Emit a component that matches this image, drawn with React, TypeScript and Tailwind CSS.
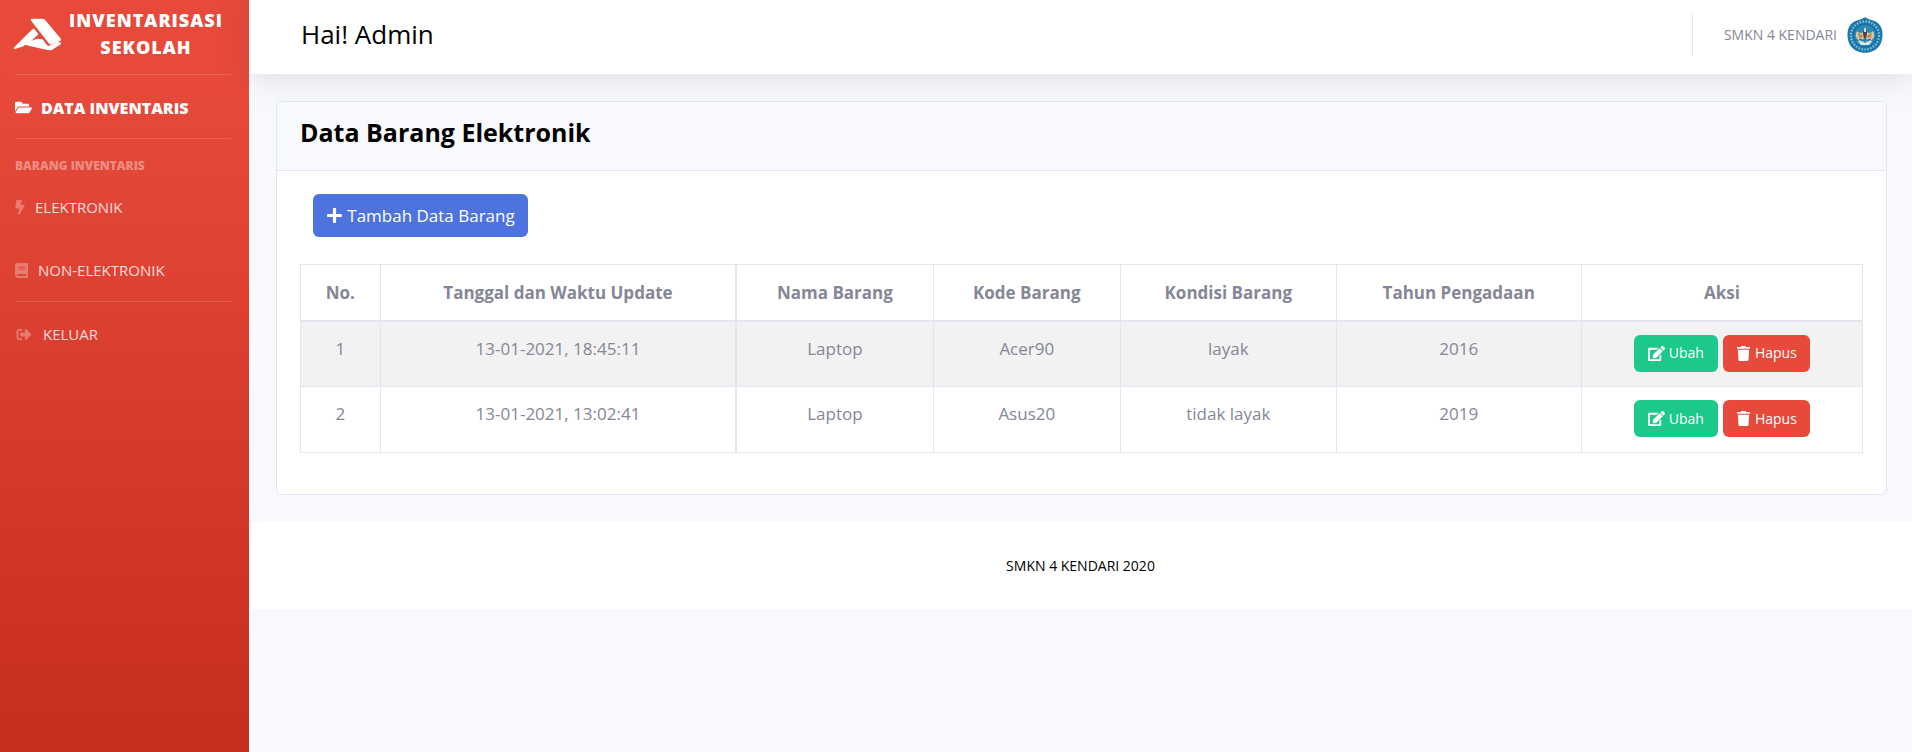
import type { ReactNode } from 'react'
import { FaAccusoft, FaBolt, FaBook, FaEdit, FaFolderOpen, FaPlus, FaSignOutAlt, FaTrash } from 'react-icons/fa'

type Item = {
  updated: string
  name: string
  code: string
  condition: string
  year: number
}

const items: Item[] = [
  { updated: '13-01-2021, 18:45:11', name: 'Laptop', code: 'Acer90', condition: 'layak', year: 2016 },
  { updated: '13-01-2021, 13:02:41', name: 'Laptop', code: 'Asus20', condition: 'tidak layak', year: 2019 },
]

const columns = [
  { label: 'No.', width: 'w-[5.1%]' },
  { label: 'Tanggal dan Waktu Update', width: 'w-[22.8%]' },
  { label: 'Nama Barang', width: 'w-[12.6%]' },
  { label: 'Kode Barang', width: 'w-[12%]' },
  { label: 'Kondisi Barang', width: 'w-[13.8%]' },
  { label: 'Tahun Pengadaan', width: 'w-[15.7%]' },
  { label: 'Aksi', width: 'w-[18%]' },
]

function SchoolCrest() {
  return (
    <svg viewBox="0 0 36 36" className="size-9" role="img" aria-label="SMKN 4 Kendari">
      <path d="M18 0.2 L22.5 2.6 C28 3.600 32 6 34 10 C36.500 16 36 24 32 29.500 C28 34 23 35.800 18 35.800 C13 35.800 8 34 4 29.500 C0 24 -0.500 16 2 10 C4 6 8 3.600 13.500 2.600 Z" fill="#1b7aa9" />
      <circle cx="18" cy="18.500" r="14" fill="none" stroke="#8fc3da" strokeWidth="2.200" strokeDasharray="1.500 1.500" />
      <circle cx="18" cy="18.500" r="11.500" fill="#2a86b3" stroke="#12638f" strokeWidth="0.800" />
      <path d="M10 14 C7.500 18 9 22.500 13 24 L17 21.500 L16 15.500 L12.500 16 Z M26 14 C28.500 18 27 22.500 23 24 L19 21.500 L20 15.500 L23.500 16 Z" fill="#cfc8b4" />
      <path d="M11 16 L15 17.500 L16 21 L12 20.500 Z M25 16 L21 17.500 L20 21 L24 20.500 Z" fill="#c58a48" />
      <path d="M18 10.500 L20 15.500 L19 21 H17 L16 15.500 Z" fill="#4b4540" />
      <path d="M17 12 L18 10 L19 12 V15 H17 Z" fill="#e3d9be" />
      <path d="M10.500 24 L16 24.500 L18 26 L20 24.500 L25.500 24 L22 28 H14 Z" fill="#dbe8ee" />
      <path d="M12 22 L15 23 M24 22 L21 23" stroke="#4b4a48" strokeWidth="1" />
    </svg>
  )
}

function NavLink({ icon, children }: { icon: ReactNode; children: ReactNode }) {
  return (
    <a href="#" className="flex h-[63px] items-center gap-[10px] px-[15px] pt-[2px] text-[15px] text-white/80">
      <span className="text-[15px] text-white/30">{icon}</span>
      {children}
    </a>
  )
}

function Divider() {
  return <hr className="mr-[18px] ml-[15px] border-t border-white/15" />
}

function Sidebar() {
  return (
    <nav className="flex w-[249px] shrink-0 flex-col bg-linear-to-b from-[#e74a3b] from-10% to-[#be2617] to-120%">
      <a href="#" className="flex h-[74px] items-center pr-[18px] pb-[6px] pl-[14px] text-white">
        <FaAccusoft className="size-[47px] shrink-0" stroke="currentColor" strokeWidth={16} />
        <span className="flex-1 text-center text-[18px] leading-[27px] font-extrabold tracking-[1px] uppercase">
          Inventarisasi Sekolah
        </span>
      </a>
      <Divider />
      <a href="#" className="flex h-[63px] items-center gap-[9px] px-[15px] pt-[2px] text-[16px] font-extrabold text-white">
        <FaFolderOpen className="size-[17px]" />
        DATA INVENTARIS
      </a>
      <Divider />
      <h2 className="px-[15px] pt-[18px] text-[12px] leading-[18px] font-extrabold text-white/40 uppercase">
        Barang Inventaris
      </h2>
      <NavLink icon={<FaBolt className="h-[15px] w-[10px]" />}>ELEKTRONIK</NavLink>
      <NavLink icon={<FaBook className="h-[15px] w-[13px]" />}>NON-ELEKTRONIK</NavLink>
      <Divider />
      <NavLink icon={<FaSignOutAlt className="w-[18px]" />}>KELUAR</NavLink>
    </nav>
  )
}

function Topbar() {
  return (
    <header className="flex h-[74px] items-center justify-between bg-white pr-[29px] pb-[5px] pl-[52px] shadow-[0_3px_32px_0_rgba(58,59,69,0.15)]">
      <p className="text-[26px] text-black">Hai! Admin</p>
      <div className="flex items-center">
        <span className="h-[42px] border-l border-[#e3e6f0]" />
        <a href="#" className="flex items-center gap-[10px] pl-[31px] text-[14px] text-[#858796]">
          SMKN 4 KENDARI
          <SchoolCrest />
        </a>
      </div>
    </header>
  )
}

function ItemTable() {
  return (
    <table className="w-full table-fixed border-collapse border border-[#e3e6f0] text-center text-[17px] text-[#858796]">
      <thead>
        <tr className="h-[56px] border-b-2 border-[#e3e6f0]">
          {columns.map((column) => (
            <th
              key={column.label}
              className={`${column.width} border-r border-[#e3e6f0] font-bold nth-2:border-r-2`}
            >
              {column.label}
            </th>
          ))}
        </tr>
      </thead>
      <tbody>
        {items.map((item, index) => (
          <tr
            key={item.code}
            className="h-[66px] border-b border-[#e3e6f0] align-top odd:bg-[#f2f2f2] *:border-r *:border-[#e3e6f0] *:pt-[13px] *:leading-[28px] *:nth-2:border-r-2"
          >
            <td>{index + 1}</td>
            <td>{item.updated}</td>
            <td>{item.name}</td>
            <td>{item.code}</td>
            <td>{item.condition}</td>
            <td>{item.year}</td>
            <td>
              <div className="flex justify-center gap-[5px] text-[14px] text-white">
                <button type="button" className="flex h-[37px] w-[84px] items-center justify-center gap-1 rounded-md bg-[#1cc88a]">
                  <FaEdit className="size-[17px]" />
                  Ubah
                </button>
                <button type="button" className="flex h-[37px] w-[87px] items-center justify-center gap-1 rounded-md bg-[#e74a3b]">
                  <FaTrash className="size-[15px]" />
                  Hapus
                </button>
              </div>
            </td>
          </tr>
        ))}
      </tbody>
    </table>
  )
}

export default function App() {
  return (
    <div className="flex min-h-screen bg-[#f8f9fc] font-['Open_Sans',sans-serif]">
      <Sidebar />
      <div className="flex min-w-0 flex-1 flex-col">
        <Topbar />
        <main className="py-[27px] pr-[25px] pl-[27px]">
          <section className="overflow-hidden rounded-md border border-[#e3e6f0] bg-white">
            <div className="border-b border-[#e3e6f0] bg-[#f8f9fc] px-[23px] pt-[12px] pb-[20px]">
              <h1 className="text-[25px] leading-[36px] font-bold text-black">Data Barang Elektronik</h1>
            </div>
            <div className="px-[23px] pt-[23px] pb-[41px]">
              <button
                type="button"
                className="mb-[27px] ml-[13px] flex h-[43px] w-[215px] items-center justify-center gap-1 rounded-md bg-[#4e73df] text-[17px] text-white"
              >
                <FaPlus className="size-[17px]" />
                Tambah Data Barang
              </button>
              <ItemTable />
            </div>
          </section>
        </main>
        <footer className="flex h-[87px] items-center justify-center bg-white text-[14px] text-black">
          SMKN 4 KENDARI 2020
        </footer>
      </div>
    </div>
  )
}
